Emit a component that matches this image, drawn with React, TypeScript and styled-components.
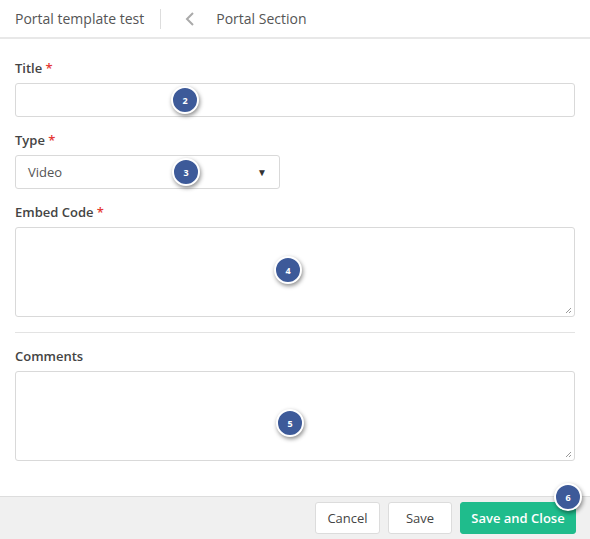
import React from "react";
import styled, { createGlobalStyle } from "styled-components";

const G = createGlobalStyle`
  body { margin:0; font-family:"Open Sans", Arial, sans-serif; background:#fff; }
`;
const Page = styled.div`position:relative;width:590px;height:539px;display:flex;flex-direction:column;overflow:hidden;`;
const Header = styled.div`height:37px;display:flex;align-items:center;padding-left:15px;border-bottom:2px solid #e8e8e8;color:#555;font-size:14px;`;
const Sep = styled.div`width:1px;height:20px;background:#ddd;margin:0 16px;`;
const Chev = styled.svg`margin:0 21px 0 8px;`;
const Form = styled.div`flex:1;padding:12px 15px 0 15px;display:flex;flex-direction:column;`;
const Label = styled.div`font-size:13px;font-weight:600;color:#444;margin:8px 0 6px;`;
const Star = styled.span`color:#e53935;`;
const Input = styled.div<{ $w?: number; $h: number }>`
  width:${p => (p.$w ? p.$w + "px" : "auto")};height:${p => p.$h}px;border:1px solid #d9d9d9;border-radius:3px;box-sizing:border-box;
  display:flex;align-items:center;justify-content:space-between;padding:0 12px;font-size:13px;color:#555;position:relative;margin-bottom:6px;`;
const Grip = styled.svg`position:absolute;right:2px;bottom:2px;`;
const Hr = styled.div`height:1px;background:#e3e3e3;margin:9px 0 6px;`;
const Footer = styled.div`height:42px;background:#f0f0f0;border-top:1px solid #ddd;display:flex;justify-content:flex-end;align-items:center;gap:8px;padding-right:14px;`;
const Btn = styled.div<{ $primary?: boolean; $w: number }>`
  width:${p => p.$w}px;height:32px;box-sizing:border-box;border-radius:3px;display:flex;align-items:center;justify-content:center;font-size:13px;
  font-weight:${p => (p.$primary ? 600 : 400)};
  background:${p => (p.$primary ? "#1fbc8c" : "#fff")};color:${p => (p.$primary ? "#fff" : "#444")};
  border:1px solid ${p => (p.$primary ? "#1fbc8c" : "#dcdcdc")};`;
const Badge = styled.div<{ $x: number; $y: number }>`
  position:absolute;left:${p => p.$x - 14}px;top:${p => p.$y - 14}px;width:24px;height:24px;border-radius:50%;
  background:#3d5a99;border:2px solid #fff;box-shadow:1px 2px 4px rgba(0,0,0,.45);color:#fff;font-size:9px;font-weight:700;
  display:flex;align-items:center;justify-content:center;`;

const Resize = () => (
  <Grip width="8" height="8" viewBox="0 0 8 8"><path d="M7 2L2 7M7 5L5 7" stroke="#999" strokeWidth="1" /></Grip>
);

export default function App() {
  return (
    <Page>
      <G />
      <Header>
        Portal template test<Sep />
        <Chev width="10" height="14" viewBox="0 0 10 14"><path d="M8 1L2 7l6 6" fill="none" stroke="#aaa" strokeWidth="2" /></Chev>
        Portal Section
      </Header>
      <Form>
        <Label>Title <Star>*</Star></Label>
        <Input $h={34} />
        <Label>Type <Star>*</Star></Label>
        <Input $w={265} $h={34}>Video<span style={{ fontSize: 10, color: "#333" }}>▼</span></Input>
        <Label>Embed Code <Star>*</Star></Label>
        <Input $h={90}><Resize /></Input>
        <Hr />
        <Label>Comments</Label>
        <Input $h={90}><Resize /></Input>
      </Form>
      <Footer>
        <Btn $w={65}>Cancel</Btn>
        <Btn $w={64}>Save</Btn>
        <Btn $w={116} $primary>Save and Close</Btn>
      </Footer>
      <Badge $x={185} $y={100}>2</Badge>
      <Badge $x={186} $y={172}>3</Badge>
      <Badge $x={288} $y={270}>4</Badge>
      <Badge $x={290} $y={423}>5</Badge>
      <Badge $x={568} $y={497}>6</Badge>
    </Page>
  );
}
